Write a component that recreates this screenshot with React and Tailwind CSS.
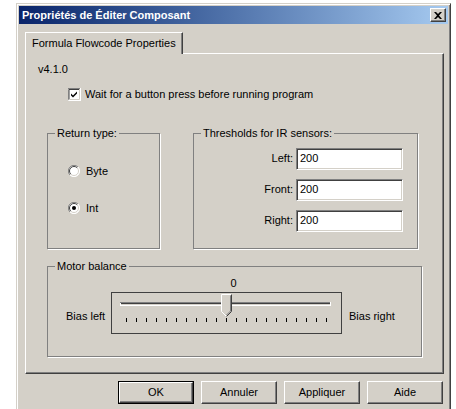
import React, { useState } from 'react';

const font = { fontFamily: '"Liberation Sans", Arial, sans-serif' };

// classic 3D edges
const raised =
  'border border-t-white border-l-white border-b-[#404040] border-r-[#404040] shadow-[inset_-1px_-1px_0_#808080]';
const sunken =
  'border border-t-[#808080] border-l-[#808080] border-b-white border-r-white shadow-[inset_1px_1px_0_#404040,inset_-1px_-1px_0_#d4d0c8]';

const CheckBox = ({ checked }) => (
  <svg width="13" height="13" viewBox="0 0 13 13" className="shrink-0">
    <rect x="0" y="0" width="13" height="13" fill="#fff" />
    <path d="M0 12.5V0.5H12.5" stroke="#808080" fill="none" />
    <path d="M1 11.5V1.5H11.5" stroke="#404040" fill="none" />
    <path d="M0.5 12.5H12.5V0" stroke="#fff" fill="none" />
    <path d="M1.5 11.5H11.5V1" stroke="#d4d0c8" fill="none" />
    {checked && (
      <path d="M3 5.5l2 2 4-4v2l-4 4-2-2z" fill="#000" />
    )}
  </svg>
);

const Radio = ({ checked }) => (
  <svg width="12" height="12" viewBox="0 0 12 12" className="shrink-0">
    <circle cx="6" cy="6" r="5.5" fill="#fff" />
    <path d="M10 2A5.5 5.5 0 0 0 2 10" stroke="#808080" strokeWidth="1" fill="none" />
    <path d="M9.2 2.8A4.5 4.5 0 0 0 2.8 9.2" stroke="#404040" strokeWidth="1" fill="none" />
    <path d="M2 10A5.5 5.5 0 0 0 10 2" stroke="#fff" strokeWidth="1" fill="none" />
    <path d="M2.8 9.2A4.5 4.5 0 0 0 9.2 2.8" stroke="#d4d0c8" strokeWidth="1" fill="none" />
    {checked && <circle cx="6" cy="6" r="2" fill="#000" />}
  </svg>
);

const GroupBox = ({ title, className, children }) => (
  <fieldset className={`border border-[#808080] shadow-[1px_1px_0_#fff] ${className}`}>
    <legend className="ml-[7px] px-[2px] leading-[13px]">{title}</legend>
    {children}
  </fieldset>
);

const Threshold = ({ label, value }) => (
  <div className="flex items-center justify-end gap-[3px]">
    <span>{label}</span>
    <div className={`${sunken} w-[107px] h-[22px] bg-white flex items-center pl-[3px]`}>{value}</div>
  </div>
);

// trackbar with 21 ticks, thumb at the middle position
const Slider = () => {
  const ticks = Array.from({ length: 21 }, (_, i) => 14.5 + i * 10);
  return (
    <svg width="229" height="40" viewBox="0 0 229 40">
      <rect x="8" y="9" width="211" height="4" fill="#fff" />
      <rect x="8" y="9" width="210" height="1" fill="#808080" />
      <rect x="9" y="10" width="209" height="1" fill="#404040" />
      <rect x="9" y="11" width="209" height="1" fill="#d4d0c8" />
      {ticks.map((x) => (
        <line key={x} x1={x} y1="25" x2={x} y2="29" stroke="#000" strokeWidth="1" />
      ))}
      <path d="M109.5 1.5H119.5V18.5L114.5 23.5L109.5 18.5Z" fill="#d4d0c8" stroke="#fff" />
      <path d="M119.5 1.5V18.5L114.5 23.5" fill="none" stroke="#404040" />
      <path d="M118.5 2.5V18L114.5 22" fill="none" stroke="#808080" />
    </svg>
  );
};

const Button = ({ label, isDefault }) => (
  <div className={isDefault ? 'border border-black' : ''}>
    <div
      className={`${raised} bg-[#d4d0c8] flex items-center justify-center ${
        isDefault ? 'w-[74px] h-[21px]' : 'w-[76px] h-[23px]'
      }`}
    >
      {label}
    </div>
  </div>
);

export default function App() {
  const [returnType] = useState('int');

  return (
    <div className="w-[456px] h-[409px] bg-white overflow-hidden text-[11px] text-black" style={font}>
      <div
        className="ml-[16px] mt-[3px] w-[435px] h-[420px] bg-[#d4d0c8] p-[2px] border border-t-[#d4d0c8] border-l-[#d4d0c8] border-b-[#404040] border-r-[#404040] shadow-[inset_1px_1px_0_#fff,inset_-1px_-1px_0_#808080]"
      >
        {/* title bar */}
        <div className="h-[18px] flex items-center justify-between pl-[3px] pr-[2px] bg-gradient-to-r from-[#0a246a] to-[#a6caf0]">
          <span className="text-white font-bold text-[11px]">Propriétés de Éditer Composant</span>
          <div className={`${raised} bg-[#d4d0c8] w-[16px] h-[14px] flex items-center justify-center`}>
            <svg width="8" height="7" viewBox="0 0 8 7">
              <path d="M0 0h2l2 2 2-2h2L5 3.5 8 7H6L4 5 2 7H0l3-3.5z" fill="#000" />
            </svg>
          </div>
        </div>

        {/* tab strip */}
        <div className="mt-[8px] ml-[6px] flex">
          <div className="relative z-10 -mb-[1px] h-[22px] px-[6px] flex items-center border border-b-0 border-t-white border-l-white border-r-[#404040] shadow-[inset_-1px_0_0_#808080] bg-[#d4d0c8]">
            Formula Flowcode Properties
          </div>
        </div>

        {/* tab page */}
        <div className={`${raised} ml-[6px] w-[419px] h-[321px] px-[12px] pt-[9px]`}>
          <div className="leading-[13px]">v4.1.0</div>
          <div className="mt-[10px] ml-[30px] flex items-center gap-[4px]">
            <CheckBox checked />
            <span>Wait for a button press before running program</span>
          </div>

          <div className="mt-[24px] ml-[9px] flex gap-[33px]">
            <GroupBox title="Return type:" className="w-[113px] h-[122px]">
              <div className="pl-[20px] pt-[23px] flex flex-col gap-[21px]">
                <div className="flex items-center gap-[6px]">
                  <Radio checked={returnType === 'byte'} />
                  <span>Byte</span>
                </div>
                <div className="flex items-center gap-[6px]">
                  <Radio checked={returnType === 'int'} />
                  <span>Int</span>
                </div>
              </div>
            </GroupBox>

            <GroupBox title="Thresholds for IR sensors:" className="w-[225px] h-[122px]">
              <div className="pr-[14px] pt-[8px] flex flex-col gap-[9px]">
                <Threshold label="Left:" value="200" />
                <Threshold label="Front:" value="200" />
                <Threshold label="Right:" value="200" />
              </div>
            </GroupBox>
          </div>

          <GroupBox title="Motor balance" className="mt-[11px] ml-[9px] w-[375px] h-[97px]">
            <div className="text-center pr-[2px] leading-[13px] mt-[4px]">0</div>
            <div className="mt-[2px] flex items-center">
              <span className="ml-[18px] mt-[7px] w-[45px]">Bias left</span>
              <div className="border border-[#404040] w-[231px] h-[42px]">
                <Slider />
              </div>
              <span className="ml-[7px] mt-[7px]">Bias right</span>
            </div>
          </GroupBox>
        </div>

        {/* dialog buttons */}
        <div className="mt-[7px] mr-[5px] flex justify-end gap-[7px]">
          <Button label="OK" isDefault />
          <Button label="Annuler" />
          <Button label="Appliquer" />
          <Button label="Aide" />
        </div>
      </div>
    </div>
  );
}
